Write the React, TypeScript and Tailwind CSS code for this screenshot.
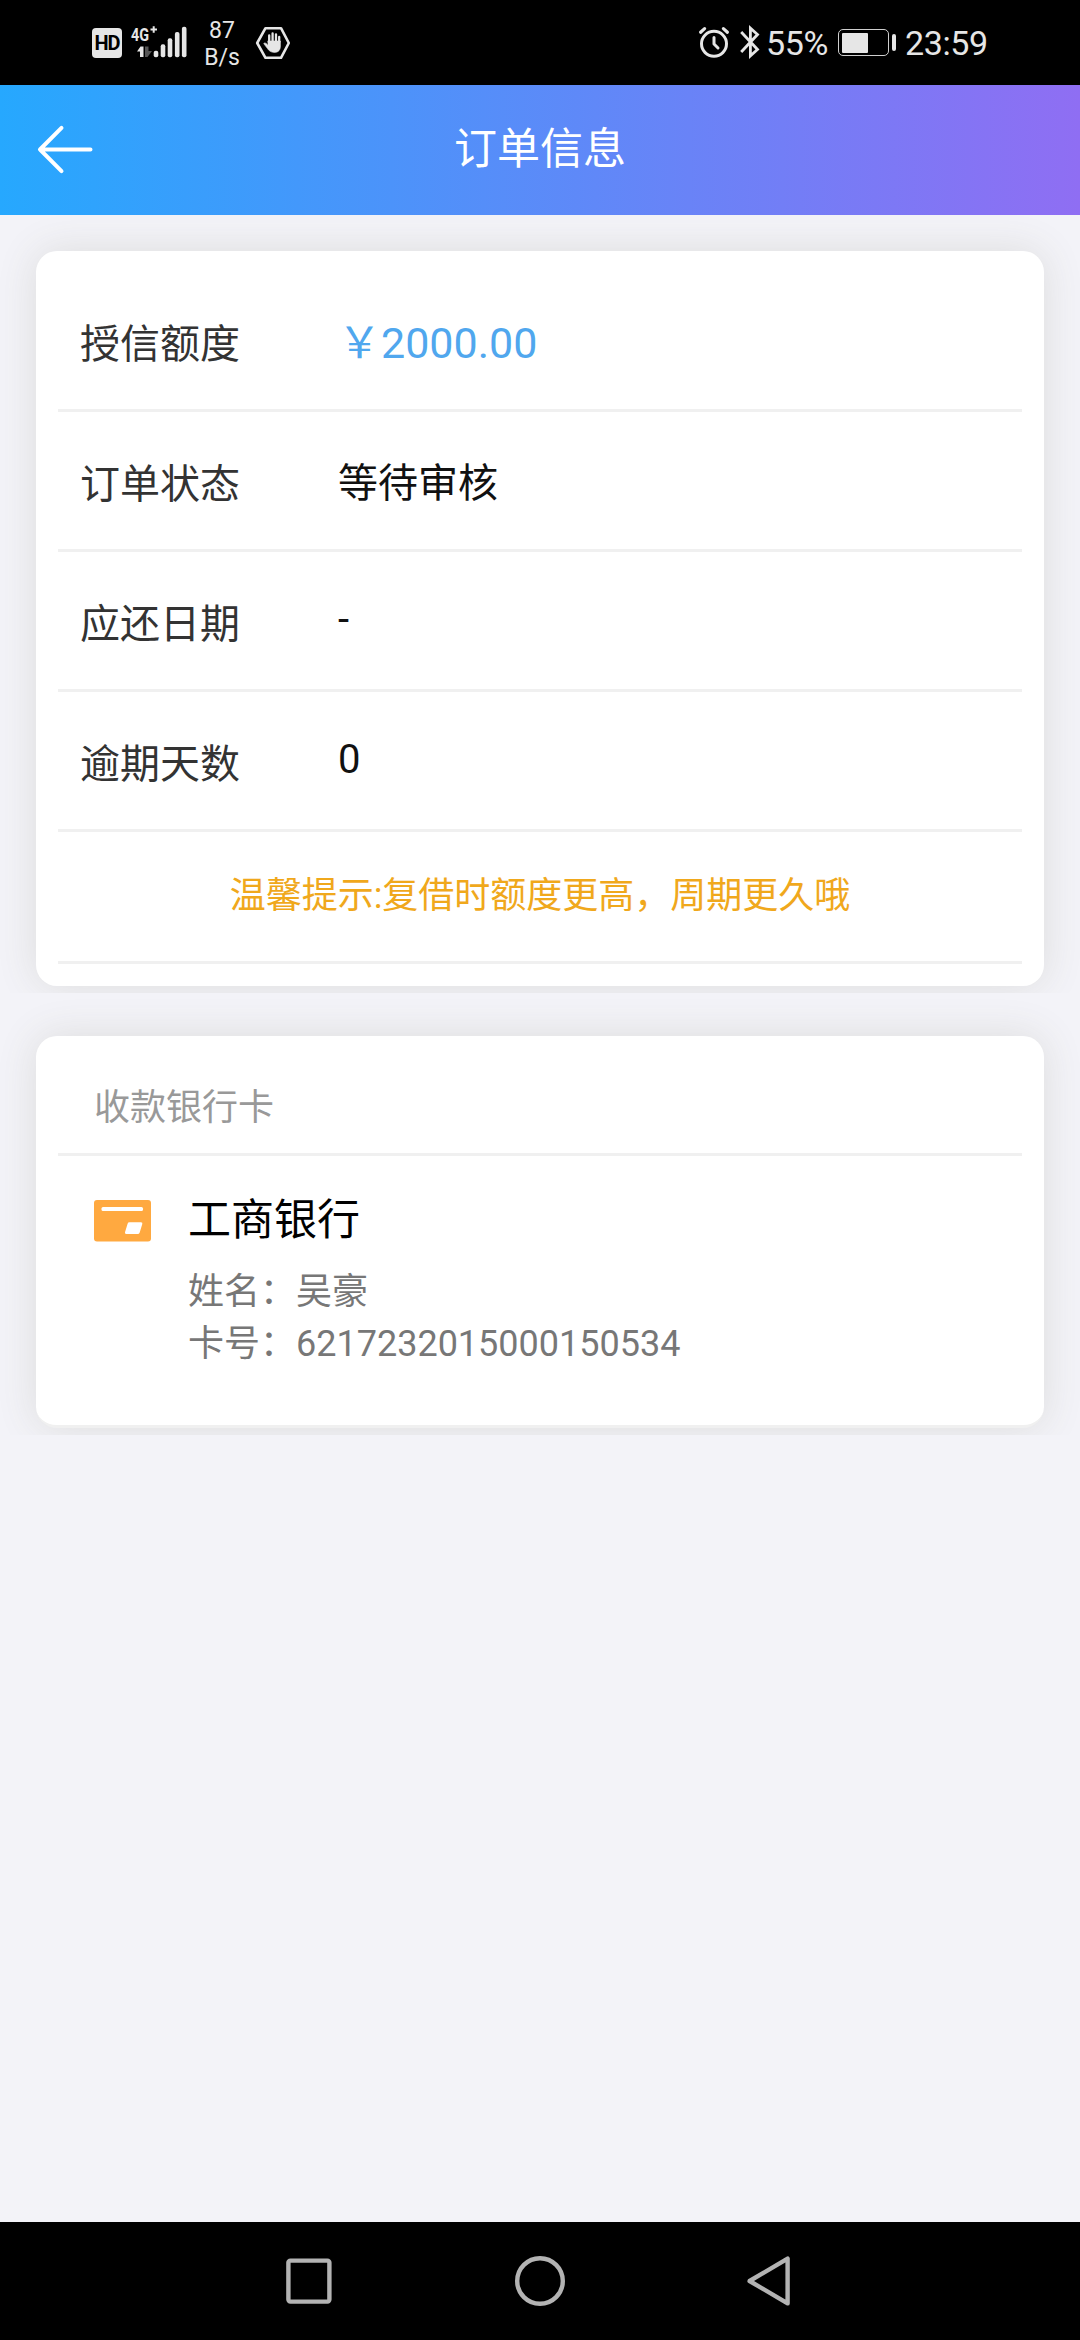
import type { ReactNode } from "react";

const FONT = "font-['Roboto','Noto_Sans_CJK_SC',sans-serif]";

const rows = [
    { label: "授信额度", value: "￥2000.00", style: "pt-[48px] text-[43px] text-[#50a7ee]" },
    { label: "订单状态", value: "等待审核", style: "pt-[49px] text-[40px] text-[#111]" },
    { label: "应还日期", value: "-", style: "pt-[45px] text-[40px] text-[#111]" },
    { label: "逾期天数", value: "0", style: "pt-[45px] text-[40px] text-[#111]" },
];

export default function App() {
    return (
        <div className={`w-[1080px] h-[2340px] flex flex-col overflow-hidden bg-[#f3f3f8] ${FONT}`}>
            <StatusBar />

            {/* Title bar */}
            <header className="h-[130px] shrink-0 grid grid-cols-[140px_1fr_140px] bg-[linear-gradient(90deg,#26a8fe,#8f6ef3)] text-white">
                <svg className="ml-[36px] mt-[39px] w-[58px] h-[52px]" viewBox="0 0 58 52" fill="none" stroke="currentColor" strokeWidth="4" strokeLinecap="round" strokeLinejoin="round">
                    <path d="M25.5 3.8L4 25.5L25.5 47.2M4 25.5H54.5" />
                </svg>
                <h1 className="pt-[34px] text-center text-[43px] leading-[60px]">订单信息</h1>
            </header>

            <main className="flex-1">
                {/* Order details */}
                <section className="overflow-hidden px-[36px] pt-[36px] pb-[7px]">
                    <Card className="h-[735px] pt-[21px]">
                        {rows.map((row) => (
                            <div key={row.label} className="h-[140px] flex items-start border-b-[3px] border-[#f0f0f0] pl-[22px] leading-[46px]">
                                <div className="w-[258px] pt-[50px] text-[40px] text-[#333]">{row.label}</div>
                                <div className={row.style}>{row.value}</div>
                            </div>
                        ))}
                        <p className="h-[132px] border-b-[3px] border-[#f0f0f0] pt-[41px] text-center text-[36px] leading-[46px] text-[#f0a81c]">
                            温馨提示:复借时额度更高，周期更久哦
                        </p>
                    </Card>
                </section>

                {/* Receiving bank card */}
                <section className="overflow-hidden px-[36px] pt-[43px] pb-[7px]">
                    <Card className="h-[392px] pt-[22px] border-b-[3px] border-[#f0f0f0]">
                        <h2 className="h-[98px] border-b-[3px] border-[#f0f0f0] pl-[36px] pt-[27px] text-[36px] leading-[46px] text-[#999]">
                            收款银行卡
                        </h2>
                        <div className="flex items-start pl-[36px] pt-[38px]">
                            <BankCardIcon />
                            <div className="ml-[37px] text-[36px] leading-[52px] text-[#777]">
                                <h3 className="mb-[20px] text-[43px] leading-[52px] text-black">工商银行</h3>
                                <p>姓名：吴豪</p>
                                <p>卡号：6217232015000150534</p>
                            </div>
                        </div>
                    </Card>
                </section>
            </main>

            <NavBar />
        </div>
    );
}

function Card({ className, children }: { className: string; children: ReactNode }) {
    return (
        <div className={`rounded-[21px] bg-white px-[22px] shadow-[0_0_40px_#dcdcdc] ${className}`}>
            {children}
        </div>
    );
}

function BankCardIcon() {
    return (
        <svg className="mt-[6px] w-[57px] h-[42px]" viewBox="0 0 57 42">
            <rect width="57" height="41.5" rx="3" fill="#ffa940" />
            <rect x="7.5" y="7" width="41.5" height="4" rx="1.5" fill="#fff" />
            <path d="M35.5 22.3H47Q48.8 22.3 48.3 24L45.7 32.5Q45.2 34 43.7 34H32.3Q30.5 34 31 32.2L33.6 23.7Q34 22.3 35.5 22.3Z" fill="#fff" />
        </svg>
    );
}

function StatusBar() {
    return (
        <div className="h-[85px] shrink-0 flex items-start bg-black text-[#e6e6e6]">
            <div className="ml-[92px] mt-[28px] w-[30px] h-[30px] rounded-[4px] bg-[#e6e6e6] text-center text-[20px] font-bold leading-[30px] tracking-[-1px] text-black">
                HD
            </div>

            {/* Mobile signal */}
            <svg className="ml-[8px] mt-[25px] w-[58px] h-[34px] overflow-visible" viewBox="0 0 58 34" fill="currentColor">
                <text x="1" y="16" fontSize="19" fontWeight="700" textLength="18" lengthAdjust="spacingAndGlyphs">4G</text>
                <path d="M20.5 4.5H27M23.7 1.3V7.8" stroke="currentColor" strokeWidth="2" />
                <path d="M7 26.5L10.5 21.5H13.5V32H10V26.5Z" />
                <path d="M15 21.5H18.5V26H22L17.5 32H15Z" fill="#555" />
                <rect x="23.7" y="25.7" width="4.6" height="6.6" rx="2" />
                <rect x="30.7" y="19.3" width="4.6" height="13" rx="2" />
                <rect x="37.7" y="13.3" width="4.6" height="19" rx="2" />
                <rect x="44.9" y="7" width="4.6" height="25.3" rx="2" />
                <rect x="51.9" y="1.7" width="4.6" height="30.6" rx="2" />
            </svg>

            <div className="ml-[14px] mt-[17px] w-[40px] text-center text-[23px] leading-[27px]">
                <div>87</div>
                <div>B/s</div>
            </div>

            {/* Hexagon with a raised hand */}
            <svg className="ml-[13px] mt-[26px] w-[36px] h-[34px]" viewBox="0 0 36 34" fill="none" stroke="currentColor" strokeLinecap="round" strokeLinejoin="round">
                <path d="M10.5 2.2H26L33.8 17L26 31.8H10.5L2.2 17Z" strokeWidth="2.6" />
                <path d="M14.2 16V9.5M17.6 15V7.5M21 15V8.3M24.2 16V11" strokeWidth="2.3" />
                <path d="M13 15H25.4V20C25.4 24 23.5 26.4 19.5 26.4C16 26.4 14 25 12.3 22.3L8.7 17.6C9.5 16.4 11 16.8 13 19.2Z" fill="currentColor" strokeWidth="0.6" />
            </svg>

            {/* Alarm */}
            <svg className="ml-[407px] mt-[26px] w-[32px] h-[32px]" viewBox="0 0 32 32" fill="none" stroke="currentColor" strokeLinecap="round">
                <circle cx="16" cy="17.8" r="12.5" strokeWidth="3" />
                <path d="M2.6 6.2L6.6 2.6M29.4 6.2L25.4 2.6" strokeWidth="3.2" />
                <path d="M16 11.5V18L20 22" strokeWidth="3" strokeLinejoin="round" />
            </svg>

            {/* Bluetooth */}
            <svg className="ml-[9px] mt-[25px] w-[22px] h-[34px]" viewBox="0 0 22 34" fill="none" stroke="currentColor" strokeWidth="2.8">
                <path d="M2.2 7L18.5 24.5L11.4 30.8V3.2L18.5 9.5L2.2 27" />
            </svg>

            <span className="ml-[5px] mt-[23px] w-[63px] text-[34px] leading-[40px] tracking-[-0.4px]">55%</span>

            {/* Battery */}
            <div className="ml-[9px] mt-[29px] w-[51px] h-[27px] rounded-[5px] border-[1.5px] border-[#cfcfcf] p-[2.5px]">
                <div className="w-[26px] h-full rounded-[1px] bg-[#e6e6e6]" />
            </div>
            <div className="ml-[3px] mt-[34px] w-[4px] h-[17px] rounded-[2px] bg-[#e6e6e6]" />

            <span className="ml-[9px] mt-[23px] text-[34px] leading-[40px] tracking-[-0.4px]">23:59</span>
        </div>
    );
}

function NavBar() {
    return (
        <nav className="h-[118px] shrink-0 flex items-start bg-black pt-[32px] text-[#b3b3b3]">
            <svg className="ml-[284px] w-[50px] h-[54px]" viewBox="0 0 50 54" fill="none" stroke="currentColor" strokeWidth="4.4">
                <rect x="4.4" y="6.6" width="41" height="41" rx="2" />
            </svg>
            <svg className="ml-[179px] w-[54px] h-[54px]" viewBox="0 0 54 54" fill="none" stroke="currentColor" strokeWidth="4.4">
                <circle cx="27" cy="27" r="22.8" />
            </svg>
            <svg className="ml-[177px] w-[50px] h-[54px]" viewBox="0 0 50 54" fill="none" stroke="currentColor" strokeWidth="4.4" strokeLinejoin="round">
                <path d="M5.6 27L43.6 4.6V49.4Z" />
            </svg>
        </nav>
    );
}
